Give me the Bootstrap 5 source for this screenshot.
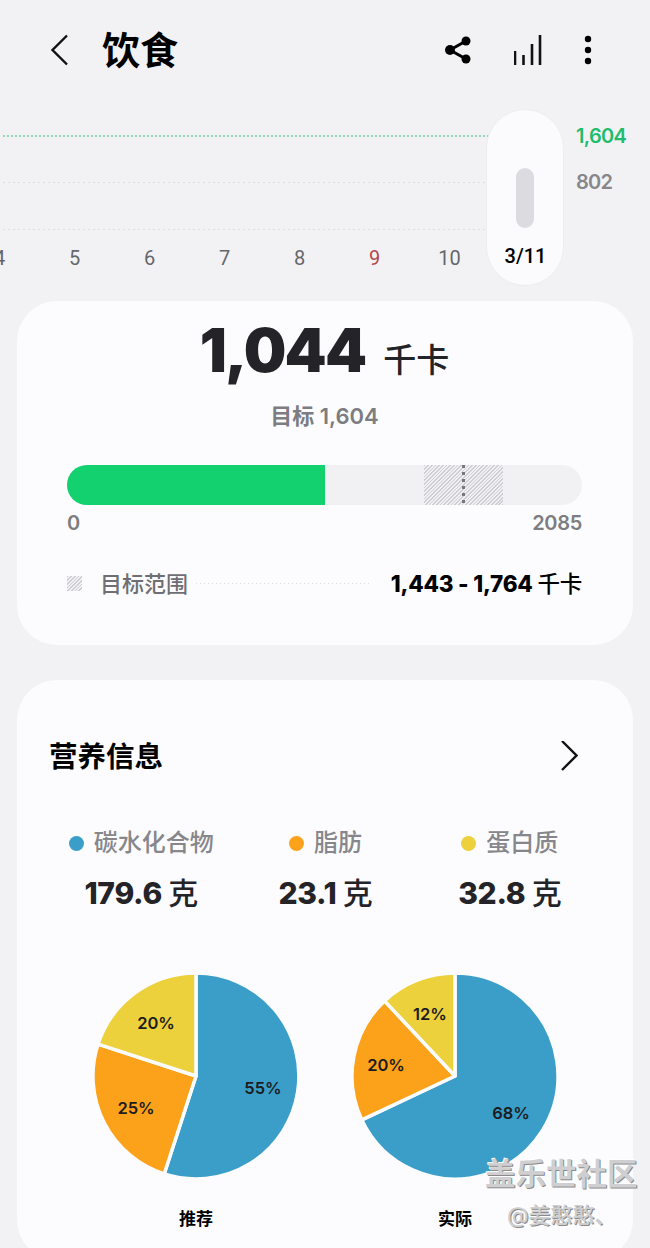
<!DOCTYPE html>
<html lang="zh">
<head>
  <meta charset="UTF-8">
  <title>饮食</title>
  <meta name="viewport" content="width=device-width, initial-scale=1">
  <link href="https://cdn.jsdelivr.net/npm/bootstrap@5.3.0/dist/css/bootstrap.min.css" rel="stylesheet">
  <style>
    html, body { height: 1248px; overflow: hidden; }
    body {
      position: relative;
      background: #f2f2f5;
      font-family: Inter, "Noto Sans CJK SC", sans-serif;
      color: #000;
    }
    .top-bar { height: 100px; padding-left: 49px; padding-right: 58px; }
    .page-title { font-size: 38px; font-weight: 700; margin-left: 33px; line-height: 1; }
    .top-icons { gap: 42px; }

    .chart-zone { position: relative; height: 201px; display: flow-root; }
    .plot-line { height: 1px; width: 490px; margin-left: 3px; background: repeating-linear-gradient(90deg, #dedee2 0 2px, transparent 2px 5px); }
    .plot-line.goal { height: 2px; background: repeating-linear-gradient(90deg, #8fd6b4 0 2px, transparent 2px 4px); margin-top: 35px; }
    .plot-line.mid { margin-top: 45px; }
    .plot-line.low { margin-top: 46px; }
    .axis-row { margin-left: -38px; margin-top: 16px; }
    .axis-day { width: 75px; text-align: center; font-size: 20px; color: #66666a; line-height: 24px; font-family: Roboto, sans-serif; }
    .axis-day.sun { color: #b5474a; }
    .axis-day.today { color: #000; font-weight: 500; }
    .day-pill {
      position: absolute; left: 486px; top: 9px; width: 78px; height: 177px;
      border-radius: 39px; background: #fbfbfd; border: 1px solid #ededf0;
    }
    .pill-bar { position: absolute; left: 29px; top: 58px; width: 18px; height: 60px; border-radius: 9px; background: #dcdce0; }
    .side-val { position: absolute; left: 576px; font-size: 20px; font-weight: 600; line-height: 24px; letter-spacing: -.7px; }
    .side-val.goal { top: 24px; color: #1fbc6d; }
    .side-val.mid { top: 70px; color: #87878b; }

    .panel { background: #fcfcfe; border-radius: 40px; margin: 0 17px; }
    .kcal-panel { height: 344px; padding: 14px 51px 0 50px; margin-bottom: 35px; }
    .kcal-big { font-size: 60px; font-weight: 900; line-height: 70px; color: #242428; letter-spacing: -1.8px; }
    .kcal-unit { font-size: 33px; font-weight: 500; margin-left: 18px; color: #242428; }
    .goal-text { font-size: 22px; font-weight: 600; color: #7d7d81; line-height: 28px; margin-top: 16px; }
    .kcal-bar { height: 40px; border-radius: 20px; background: #f1f1f4; overflow: hidden; margin-top: 35px; }
    .kcal-fill { width: 258px; background: #13d16f; }
    .goal-zone { width: 79px; margin-left: 99px; }
    .hatch { background: repeating-linear-gradient(135deg, #cfcfd3 0 1.2px, #f1f1f4 1.2px 2.6px); }
    .goal-mark { width: 3px; background: repeating-linear-gradient(180deg, #77777c 0 3px, transparent 3px 7px); }
    .bar-ends { font-size: 20px; font-weight: 600; color: #7d7d81; line-height: 24px; margin-top: 6px; letter-spacing: -.3px; }
    .range-row { margin-top: 35px; line-height: 28px; }
    .range-swatch { width: 15px; height: 15px; }
    .range-name { font-size: 22px; font-weight: 500; color: #6f6f73; margin-left: 18px; }
    .range-dots { height: 1px; background: repeating-linear-gradient(90deg, #dcdce0 0 1px, transparent 1px 4px); margin: 0 20px 0 8px; }
    .range-val { font-size: 22.5px; font-weight: 800; letter-spacing: -.2px; }
    .range-val span { font-weight: 500; }

    .nutri-panel { height: 580px; padding: 58px 31px 0 32px; }
    .nutri-title { font-size: 28.5px; font-weight: 600; line-height: 38px; }
    .macro-row { margin-top: 52px; }
    .macro-name { font-size: 24px; font-weight: 500; color: #87878b; line-height: 30px; gap: 10px; }
    .macro-dot { width: 15px; height: 15px; border-radius: 50%; }
    .macro-val { font-size: 30px; font-weight: 800; line-height: 36px; margin-top: 17px; color: #242428; letter-spacing: -.3px; }
    .macro-val span { font-weight: 500; }
    .pie-row { margin-top: 60px; }
    .pie-col { width: 259px; }
    .pie-col text { font-size: 16.5px; font-weight: 600; fill: #1c1c1e; text-anchor: middle; font-family: Inter, sans-serif; }
    .pie-name { font-size: 17px; font-weight: 700; line-height: 20px; margin-top: 28px; }

    .watermark { position: absolute; text-shadow: 1px 1px 0 #8a8a8a, -1px -1px 0 #fff; color: #cfcfd2; line-height: 1; white-space: nowrap; }
    .wm-main { left: 485px; top: 1159px; font-size: 30.5px; font-weight: 700; }
    .wm-sub { left: 507px; top: 1204px; font-size: 22px; font-weight: 500; }
  </style>
</head>
<body>
  <div class="top-bar d-flex align-items-center">
    <svg width="20" height="32" viewBox="0 0 20 32"><path d="M18 1.5 3.5 16 18 30.5" fill="none" stroke="#111" stroke-width="2.4"/></svg>
    <div class="page-title">饮食</div>
    <div class="top-icons d-flex align-items-center ms-auto">
      <svg width="28" height="30" viewBox="0 0 28 30">
        <path d="M22 6 6 15l16 9" fill="none" stroke="#000" stroke-width="3"/>
        <circle cx="22" cy="6" r="4.5"/><circle cx="6" cy="15" r="5"/><circle cx="22" cy="24" r="4.5"/>
      </svg>
      <svg width="28" height="32" viewBox="0 0 28 32">
        <path d="M1 31V17M9.5 31V21M18 31V10M26 31V1" fill="none" stroke="#111" stroke-width="2.6"/>
      </svg>
      <svg width="8" height="30" viewBox="0 0 8 30"><circle cx="4" cy="4" r="3.2"/><circle cx="4" cy="15" r="3.2"/><circle cx="4" cy="26" r="3.2"/></svg>
    </div>
  </div>

  <div class="chart-zone">
    <div class="plot-line goal"></div>
    <div class="plot-line mid"></div>
    <div class="plot-line low"></div>
    <div class="axis-row d-flex">
      <div class="axis-day">4</div>
      <div class="axis-day">5</div>
      <div class="axis-day">6</div>
      <div class="axis-day">7</div>
      <div class="axis-day">8</div>
      <div class="axis-day sun">9</div>
      <div class="axis-day">10</div>
    </div>
    <div class="day-pill"><div class="pill-bar"></div></div>
    <div class="axis-day today position-absolute" style="left:488px;top:144px">3/11</div>
    <div class="side-val goal">1,604</div>
    <div class="side-val mid">802</div>
  </div>

  <div class="panel kcal-panel">
    <div class="d-flex justify-content-center align-items-baseline">
      <span class="kcal-big">1,044</span><span class="kcal-unit">千卡</span>
    </div>
    <div class="goal-text text-center">目标 1,604</div>
    <div class="kcal-bar d-flex">
      <div class="kcal-fill"></div>
      <div class="goal-zone hatch d-flex justify-content-center"><div class="goal-mark"></div></div>
    </div>
    <div class="bar-ends d-flex justify-content-between"><span>0</span><span>2085</span></div>
    <div class="range-row d-flex align-items-center">
      <div class="range-swatch hatch"></div>
      <div class="range-name">目标范围</div>
      <div class="range-dots flex-grow-1"></div>
      <div class="range-val">1,443 - 1,764 <span>千卡</span></div>
    </div>
  </div>

  <div class="panel nutri-panel">
    <div class="d-flex justify-content-between align-items-center">
      <div class="nutri-title">营养信息</div>
      <svg class="me-4" width="20" height="32" viewBox="0 0 20 32"><path d="M4 0 18.5 14.5 4 29" fill="none" stroke="#111" stroke-width="2.4"/></svg>
    </div>
    <div class="macro-row row g-0 text-center">
      <div class="col-4">
        <div class="macro-name d-flex align-items-center justify-content-center"><i class="macro-dot" style="background:#3a9ec9"></i>碳水化合物</div>
        <div class="macro-val">179.6 <span>克</span></div>
      </div>
      <div class="col-4">
        <div class="macro-name d-flex align-items-center justify-content-center"><i class="macro-dot" style="background:#fba21a"></i>脂肪</div>
        <div class="macro-val">23.1 <span>克</span></div>
      </div>
      <div class="col-4">
        <div class="macro-name d-flex align-items-center justify-content-center"><i class="macro-dot" style="background:#ecd13c"></i>蛋白质</div>
        <div class="macro-val">32.8 <span>克</span></div>
      </div>
    </div>
    <div class="pie-row d-flex justify-content-center">
      <div class="pie-col text-center">
        <svg width="210" height="210" viewBox="-105 -105 210 210">
          <g stroke="#fcfcfe" stroke-width="3.5" stroke-linejoin="round">
            <path d="M0 0V-103A103 103 0 1 1 -31.8 98Z" fill="#3a9ec9"/>
            <path d="M0 0L-31.8 98A103 103 0 0 1 -98 -31.8Z" fill="#fba21a"/>
            <path d="M0 0L-98 -31.8A103 103 0 0 1 0 -103Z" fill="#ecd13c"/>
          </g>
          <text x="67" y="18">55%</text>
          <text x="-60" y="38">25%</text>
          <text x="-40" y="-47">20%</text>
        </svg>
        <div class="pie-name">推荐</div>
      </div>
      <div class="pie-col text-center">
        <svg width="210" height="210" viewBox="-105 -105 210 210">
          <g stroke="#fcfcfe" stroke-width="3.5" stroke-linejoin="round">
            <path d="M0 0V-103A103 103 0 1 1 -93.2 43.9Z" fill="#3a9ec9"/>
            <path d="M0 0L-93.2 43.9A103 103 0 0 1 -70.5 -75.1Z" fill="#fba21a"/>
            <path d="M0 0L-70.5 -75.1A103 103 0 0 1 0 -103Z" fill="#ecd13c"/>
          </g>
          <text x="56" y="43">68%</text>
          <text x="-69" y="-5">20%</text>
          <text x="-25" y="-56">12%</text>
        </svg>
        <div class="pie-name">实际</div>
      </div>
    </div>
  </div>

  <div class="watermark wm-main">盖乐世社区</div>
  <div class="watermark wm-sub">@姜憨憨、</div>

  <script src="https://cdn.jsdelivr.net/npm/bootstrap@5.3.0/dist/js/bootstrap.bundle.min.js"></script>
</body>
</html>
